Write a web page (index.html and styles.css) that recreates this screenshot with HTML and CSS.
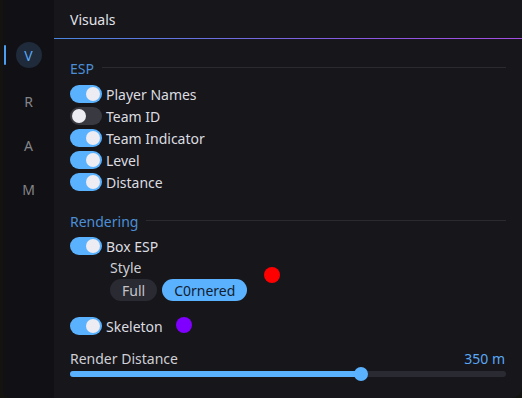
FILE: index.html
```html
<!DOCTYPE html>
<html>
<head>
<meta charset="utf-8">
<link rel="stylesheet" href="styles.css">
</head>
<body>
<div class="window">
  <nav class="sidebar">
    <div class="nav-item active"><span class="nav-circle">V</span></div>
    <div class="nav-item">R</div>
    <div class="nav-item">A</div>
    <div class="nav-item">M</div>
  </nav>
  <main class="main">
    <header class="header">Visuals</header>
    <div class="header-line"></div>
    <div class="content">
      <div class="section-title esp"><span>ESP</span><div class="rule"></div></div>
      <div class="row"><span class="toggle on"></span><span class="label">Player Names</span></div>
      <div class="row"><span class="toggle"></span><span class="label">Team ID</span></div>
      <div class="row"><span class="toggle on"></span><span class="label">Team Indicator</span></div>
      <div class="row"><span class="toggle on"></span><span class="label">Level</span></div>
      <div class="row"><span class="toggle on"></span><span class="label">Distance</span></div>

      <div class="section-title rendering"><span>Rendering</span><div class="rule"></div></div>
      <div class="row"><span class="toggle on"></span><span class="label">Box ESP</span></div>
      <div class="style-row">
        <div class="style-block">
          <div class="style-label">Style</div>
          <div class="seg">
            <span class="seg-btn">Full</span>
            <span class="seg-btn selected">C0rnered</span>
          </div>
        </div>
        <span class="swatch red"></span>
      </div>
      <div class="row skeleton"><span class="toggle on"></span><span class="label">Skeleton</span><span class="swatch purple"></span></div>

      <div class="slider-head"><span class="slider-label">Render Distance</span><span class="slider-value">350 m</span></div>
      <div class="slider">
        <div class="slider-fill" style="width: 66.75%"><span class="thumb"></span></div>
      </div>
    </div>
  </main>
</div>
</body>
</html>
```
FILE: styles.css
```css
* { box-sizing: border-box; }
html, body {
  margin: 0;
  padding: 0;
  background: #15130f;
  font-family: "Noto Sans", "Open Sans", sans-serif;
  font-size: 14px;
  width: 522px;
  height: 398px;
  overflow: hidden;
}
.window {
  display: flex;
  height: 398px;
  margin-left: 3px;
  border-radius: 0 0 10px 8px;
  overflow: hidden;
  background: #16161b;
}
.sidebar {
  width: 51px;
  background: #111115;
  padding-top: 33px;
  display: flex;
  flex-direction: column;
  position: relative;
}
.nav-item {
  height: 44px;
  display: flex;
  align-items: center;
  justify-content: center;
  color: #84848b;
  font-size: 14px;
  position: relative;
}
.nav-item:nth-child(2) { margin-top: 2px; }
.nav-item.active::before {
  content: "";
  position: absolute;
  left: 1px;
  top: 12px;
  width: 2px;
  height: 20px;
  background: #4b9ef0;
  border-radius: 1px;
}
.nav-circle {
  width: 26px;
  height: 26px;
  border-radius: 50%;
  background: #1f2a3a;
  color: #5aa8f5;
  display: flex;
  align-items: center;
  justify-content: center;
}
.main {
  flex: 1;
  display: flex;
  flex-direction: column;
}
.header {
  height: 38px;
  padding-left: 16px;
  display: flex;
  align-items: center;
  color: #e2e2e6;
  font-size: 14px;
}
.header-line {
  height: 1px;
  background: linear-gradient(90deg, #4a86e0, #8d55e0 70%, #a24ee0);
}
.content {
  padding: 0 16px 0 16px;
  display: flex;
  flex-direction: column;
}
.section-title {
  display: flex;
  align-items: center;
  gap: 8px;
  color: #4c8fd6;
  height: 20px;
}
.section-title.esp { margin-top: 19px; margin-bottom: 5px; }
.section-title.rendering { margin-top: 18px; margin-bottom: 4px; }
.section-title .rule {
  flex: 1;
  height: 1px;
  background: #2a2a31;
  margin-top: -2px;
}
.row {
  height: 22px;
  display: flex;
  align-items: center;
  gap: 4px;
}
.label { color: #dcdce0; }
.toggle {
  width: 32px;
  height: 18px;
  border-radius: 9px;
  background: #393941;
  position: relative;
  flex: none;
}
.toggle::after {
  content: "";
  position: absolute;
  top: 2px;
  left: 2px;
  width: 14px;
  height: 14px;
  border-radius: 50%;
  background: #ececf2;
}
.toggle.on { background: #5ab2ff; }
.toggle.on::after { left: 16px; }
.style-row {
  display: flex;
  align-items: flex-start;
  padding-left: 40px;
  gap: 17px;
}
.style-block {
  display: flex;
  flex-direction: column;
}
.style-label {
  color: #cfcfd4;
  height: 18px;
  line-height: 18px;
  margin-top: 2px;
  margin-bottom: 2px;
}
.seg {
  display: flex;
  gap: 5px;
}
.seg-btn {
  height: 22px;
  border-radius: 11px;
  background: #2a2a33;
  color: #c4c4ca;
  display: flex;
  align-items: center;
  padding: 0 12px;
}
.seg-btn.selected {
  background: #5ab2ff;
  color: #14202e;
}
.swatch {
  width: 16px;
  height: 16px;
  border-radius: 50%;
  flex: none;
}
.swatch.red { background: #ff0000; margin-top: 10px; }
.swatch.purple { background: #8000ff; margin-left: 9px; margin-top: -2px; }
.row.skeleton { margin-top: 14px; }
.slider-head {
  display: flex;
  justify-content: space-between;
  align-items: center;
  height: 20px;
  margin-top: 11px;
}
.slider-label { color: #cfcfd4; }
.slider-value { color: #5aa8f5; padding-right: 1px; }
.slider {
  height: 6px;
  border-radius: 3px;
  background: #2a2a33;
  margin-top: 3px;
}
.slider-fill {
  height: 6px;
  border-radius: 3px;
  background: #5ab2ff;
  position: relative;
}
.thumb {
  position: absolute;
  right: -7px;
  top: -4px;
  width: 14px;
  height: 14px;
  border-radius: 50%;
  background: #5ab2ff;
}
```
